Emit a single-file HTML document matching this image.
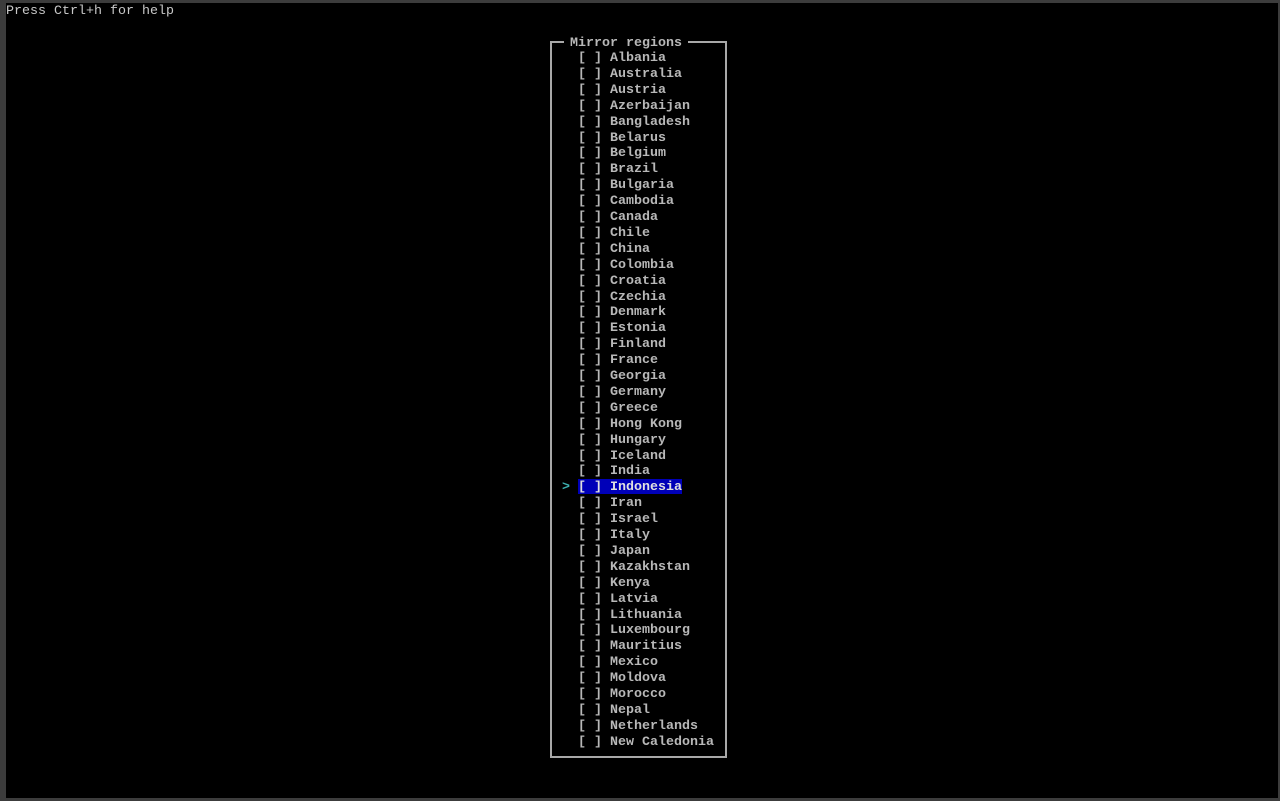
<!DOCTYPE html>
<html><head><style>
html,body{margin:0;padding:0;background:#3c3c3c;width:1280px;height:801px;overflow:hidden}
#scr{position:absolute;left:6px;top:3px;width:1272px;height:795px;background:#000}
.t{position:absolute;font-family:"Liberation Mono",monospace;font-size:13.33px;line-height:16px;height:16px;color:#b8b8b8;font-weight:bold;white-space:pre;letter-spacing:0}
#box{position:absolute;left:550px;top:41px;width:173px;height:713px;border:2px solid #a8a8a8}
.hl{background:#0000b8;color:#e0e0e0}
</style></head><body>
<div id="scr"></div>
<div class="t" style="left:6px;top:4px;font-weight:normal;color:#c8c8c8">Press Ctrl+h for help</div>
<div id="box"></div>
<div class="t" style="left:564px;top:38px;height:10px;line-height:12px;background:#000;padding:0 6px">Mirror regions</div>
<div id="list"></div>
<div class="t" style="left:562px;top:480px;color:#3cb0b0">&gt;</div>
<script>
var c=["Albania","Australia","Austria","Azerbaijan","Bangladesh","Belarus","Belgium","Brazil","Bulgaria","Cambodia","Canada","Chile","China","Colombia","Croatia","Czechia","Denmark","Estonia","Finland","France","Georgia","Germany","Greece","Hong Kong","Hungary","Iceland","India","Indonesia","Iran","Israel","Italy","Japan","Kazakhstan","Kenya","Latvia","Lithuania","Luxembourg","Mauritius","Mexico","Moldova","Morocco","Nepal","Netherlands","New Caledonia"];
var h="";c.forEach(function(n,i){var y=Math.round(51+15.9*i);h+='<div class="t'+(n=="Indonesia"?' hl':'')+'" style="left:578px;top:'+y+'px;'+(n=="Indonesia"?'top:'+(y-1)+'px;line-height:18px;height:15px;':'')+'">[ ] '+n+'</div>';});
document.getElementById("list").innerHTML=h;
</script>
</body></html>
